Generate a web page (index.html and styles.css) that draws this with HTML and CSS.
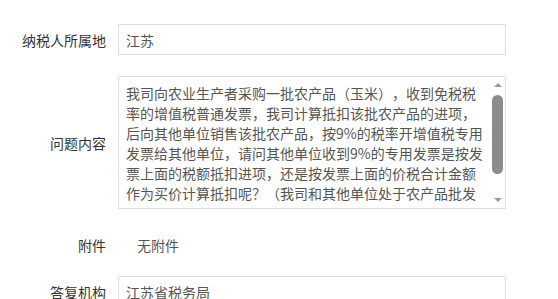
FILE: index.html
```html
<!DOCTYPE html>
<html lang="zh-CN">
<head>
<meta charset="UTF-8" />
<meta name="viewport" content="width=device-width, initial-scale=1" />
<title>问题详情</title>
<link rel="stylesheet" href="styles.css">
</head>
<body>

<div class="form">
  <div class="row row-first">
    <label class="label">纳税人所属地</label>
    <input class="field" type="text" value="江苏" readonly />
  </div>

  <div class="row row-area">
    <label class="label">问题内容</label>
    <div class="area-wrap">
      <textarea class="area" readonly>我司向农业生产者采购一批农产品（玉米），收到免税税
率的增值税普通发票，我司计算抵扣该批农产品的进项，
后向其他单位销售该批农产品，按9%的税率开增值税专用
发票给其他单位，请问其他单位收到9%的专用发票是按发
票上面的税额抵扣进项，还是按发票上面的价税合计金额
作为买价计算抵扣呢？（我司和其他单位处于农产品批发
环节，均为一般纳税人，其他单位购进后用于生产销售。）</textarea>
      <!-- 滚动条 -->
      <div class="scrollbar">
        <span class="arrow arrow-up"></span>
        <span class="thumb"></span>
        <span class="arrow arrow-down"></span>
      </div>
    </div>
  </div>

  <div class="row row-plain">
    <label class="label">附件</label>
    <span class="plain">无附件</span>
  </div>

  <div class="row row-last">
    <label class="label">答复机构</label>
    <input class="field" type="text" value="江苏省税务局" readonly />
  </div>
</div>

</body>
</html>
```

FILE: styles.css
```css
html, body {
  margin: 0;
  padding: 0;
  background: #fff;
  overflow: hidden;
}
body {
  font-family: "Noto Sans CJK SC", "Noto Sans", sans-serif;
  font-size: 14px;
  color: #333;
  text-spacing-trim: space-all;
}
.form {
  padding-top: 24px;
}
.row {
  display: flex;
  align-items: center;
  gap: 12px;
}
.label {
  width: 106px;
  flex: none;
  text-align: right;
  color: #333;
}
.field {
  width: 388px;
  height: 31px;
  box-sizing: border-box;
  border: 1px solid #dedede;
  padding: 0 7px;
  font-family: inherit;
  font-size: 14px;
  color: #555;
  background: #fff;
  outline: none;
  margin: 0;
  text-spacing-trim: space-all;
}
.row-area {
  margin-top: 21px;
}
.area-wrap {
  position: relative;
  width: 388px;
  height: 133px;
  box-sizing: border-box;
  border: 1px solid #dedede;
  padding-bottom: 6px;
}
.area {
  width: 100%;
  height: 100%;
  box-sizing: border-box;
  border: none;
  margin: 0;
  outline: none;
  font-family: inherit;
  font-size: 14px;
  color: #555;
  line-height: 20px;
  padding: 6px 22px 0 7px;
  resize: none;
  overflow: hidden;
  display: block;
  white-space: pre;
  text-spacing-trim: space-all;
}
.scrollbar {
  position: absolute;
  top: 0;
  bottom: 0;
  right: 1px;
  width: 13px;
  display: flex;
  flex-direction: column;
  align-items: center;
}
.arrow {
  width: 0;
  height: 0;
  border-left: 4px solid transparent;
  border-right: 4px solid transparent;
}
.arrow-up {
  margin-top: 6px;
  border-bottom: 4px solid #9a9a9a;
}
.arrow-down {
  margin-top: 24px;
  border-top: 4px solid #9a9a9a;
}
.thumb {
  margin-top: 8px;
  width: 11px;
  height: 79px;
  background: #8c8c8c;
  border-radius: 6px;
}
.row-plain {
  margin-top: 26px;
  height: 20px;
}
.plain {
  padding-left: 19px;
  color: #555;
}
.row-last {
  margin-top: 21px;
}
```
